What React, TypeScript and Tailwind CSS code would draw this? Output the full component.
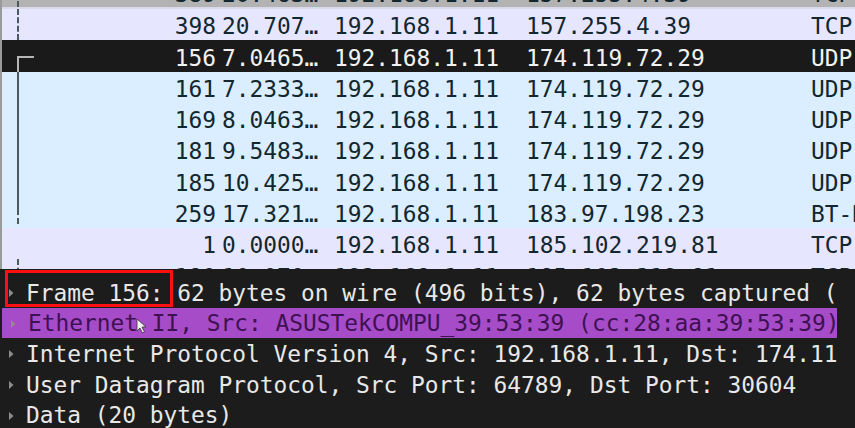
import React from "react";

type Tree = "none" | "dash" | "start" | "line" | "end";

type Packet = {
  no: string;
  time: string;
  src: string;
  dst: string;
  proto: string;
  kind: "top" | "tcp" | "sel" | "udp";
  tree: Tree;
};

const packets: Packet[] = [
  { no: "389", time: "20.463…", src: "192.168.1.11", dst: "157.255.4.39", proto: "TCP", kind: "top", tree: "dash" },
  { no: "398", time: "20.707…", src: "192.168.1.11", dst: "157.255.4.39", proto: "TCP", kind: "tcp", tree: "dash" },
  { no: "156", time: "7.0465…", src: "192.168.1.11", dst: "174.119.72.29", proto: "UDP", kind: "sel", tree: "start" },
  { no: "161", time: "7.2333…", src: "192.168.1.11", dst: "174.119.72.29", proto: "UDP", kind: "udp", tree: "line" },
  { no: "169", time: "8.0463…", src: "192.168.1.11", dst: "174.119.72.29", proto: "UDP", kind: "udp", tree: "line" },
  { no: "181", time: "9.5483…", src: "192.168.1.11", dst: "174.119.72.29", proto: "UDP", kind: "udp", tree: "line" },
  { no: "185", time: "10.425…", src: "192.168.1.11", dst: "174.119.72.29", proto: "UDP", kind: "udp", tree: "line" },
  { no: "259", time: "17.321…", src: "192.168.1.11", dst: "183.97.198.23", proto: "BT-DHT", kind: "udp", tree: "end" },
  { no: "1", time: "0.0000…", src: "192.168.1.11", dst: "185.102.219.81", proto: "TCP", kind: "tcp", tree: "none" },
  { no: "180", time: "10.070…", src: "192.168.1.11", dst: "185.102.219.81", proto: "TCP", kind: "tcp", tree: "dash" },
];

const rowBg: Record<Packet["kind"], string> = {
  top: "bg-[#b3b3b3] text-[#12272e] border-b-2 border-[#d8d8e8]",
  tcp: "bg-[#e7e6ff] text-[#12272e]",
  sel: "bg-[#1a1a1a] text-[#f2f2f2]",
  udp: "bg-[#daeeff] text-[#12272e]",
};

function TreeMark({ tree, selected }: { tree: Tree; selected: boolean }): React.JSX.Element {
  const color = selected ? "border-[#b5b5b5]" : "border-[#4a5a5e]";
  if (tree === "dash") {
    return <div className={`ml-[15px] h-full border-l-2 border-dashed ${color}`} />;
  }
  if (tree === "line") {
    return <div className={`ml-[15px] h-full border-l-2 ${color}`} />;
  }
  if (tree === "start") {
    return (
      <div className="flex h-full flex-col">
        <div className="h-1/2" />
        <div className={`ml-[15px] h-1/2 w-[17px] border-l-2 border-t-2 ${color}`} />
      </div>
    );
  }
  if (tree === "end") {
    return (
      <div className="flex h-full flex-col">
        <div className={`ml-[15px] h-[58%] border-l-2 ${color}`} />
        <div className={`ml-[15px] mt-[3px] h-[6px] border-l-2 ${color}`} />
      </div>
    );
  }
  return <div />;
}

function PacketRow({ p, first }: { p: Packet; first: boolean }): React.JSX.Element {
  return (
    <div className={`flex h-[31.3px] shrink-0 whitespace-nowrap ${rowBg[p.kind]} ${first ? "-mt-[22.3px]" : ""}`}>
      <div className="h-full w-[30px] shrink-0">
        <TreeMark tree={p.tree} selected={p.kind === "sel"} />
      </div>
      <div className="flex flex-1 items-center pt-[4px]">
        <div className="w-[184px] shrink-0 text-right">{p.no}</div>
        <div className="ml-[6px] w-[112px] shrink-0">{p.time}</div>
        <div className="w-[192px] shrink-0">{p.src}</div>
        <div className="w-[285px] shrink-0">{p.dst}</div>
        <div className="shrink-0">{p.proto}</div>
      </div>
    </div>
  );
}

function Arrow(): React.JSX.Element {
  return (
    <svg width="6" height="10" viewBox="0 0 6 10" className="shrink-0">
      <path d="M1 1 L5.5 5 L1 9 Z" fill="#8c8c8c" />
    </svg>
  );
}

const details = [
  "Frame 156: 62 bytes on wire (496 bits), 62 bytes captured (496 bits) on interface",
  "Ethernet II, Src: ASUSTekCOMPU_39:53:39 (cc:28:aa:39:53:39), Dst: Sagemcom",
  "Internet Protocol Version 4, Src: 192.168.1.11, Dst: 174.119.72.29",
  "User Datagram Protocol, Src Port: 64789, Dst Port: 30604",
  "Data (20 bytes)",
];

export default function App(): React.JSX.Element {
  return (
    <div className="flex h-[428px] w-[855px] flex-col overflow-hidden bg-[#1c1c1c] font-['DejaVu_Sans_Mono',monospace] text-[22.85px] leading-none">
      <div className="flex h-[269px] shrink-0 flex-col overflow-hidden border-l-2 border-[#9a9a9a] bg-[#e7e6ff]">
        {packets.map((p, i) => (
          <PacketRow key={p.no} p={p} first={i === 0} />
        ))}
      </div>

      <div className="flex min-h-0 flex-1">
        <div className="w-[837px] shrink-0 overflow-hidden pt-[8px]">
          {details.map((d, i) => (
            <div
              key={d}
              className={`relative flex h-[30.6px] items-center whitespace-nowrap pl-[8px] pt-[2px] ${
                i === 1 ? "ml-[2px] bg-[#a74cc8] pl-[6px] text-[#3e1152]" : "text-[#e8e8e8]"
              }`}
            >
              <Arrow />
              <span className="ml-[12px]">{d}</span>
              {i === 0 ? (
                <div className="absolute left-[5px] top-[-7px] h-[37px] w-[168px] border-[3px] border-[#ff1010]" />
              ) : null}
              {i === 1 ? (
                <svg width="11" height="16" viewBox="0 0 11 16" className="absolute left-[134px] top-[10px]">
                  <path d="M1 1 L1 13 L4 10 L6.5 15 L8.5 14 L6 9 L10 9 Z" fill="#f4f4f4" stroke="#333" strokeWidth="0.8" />
                </svg>
              ) : null}
            </div>
          ))}
        </div>
        <div className="flex-1 bg-[#1c1c1c]" />
      </div>
    </div>
  );
}
